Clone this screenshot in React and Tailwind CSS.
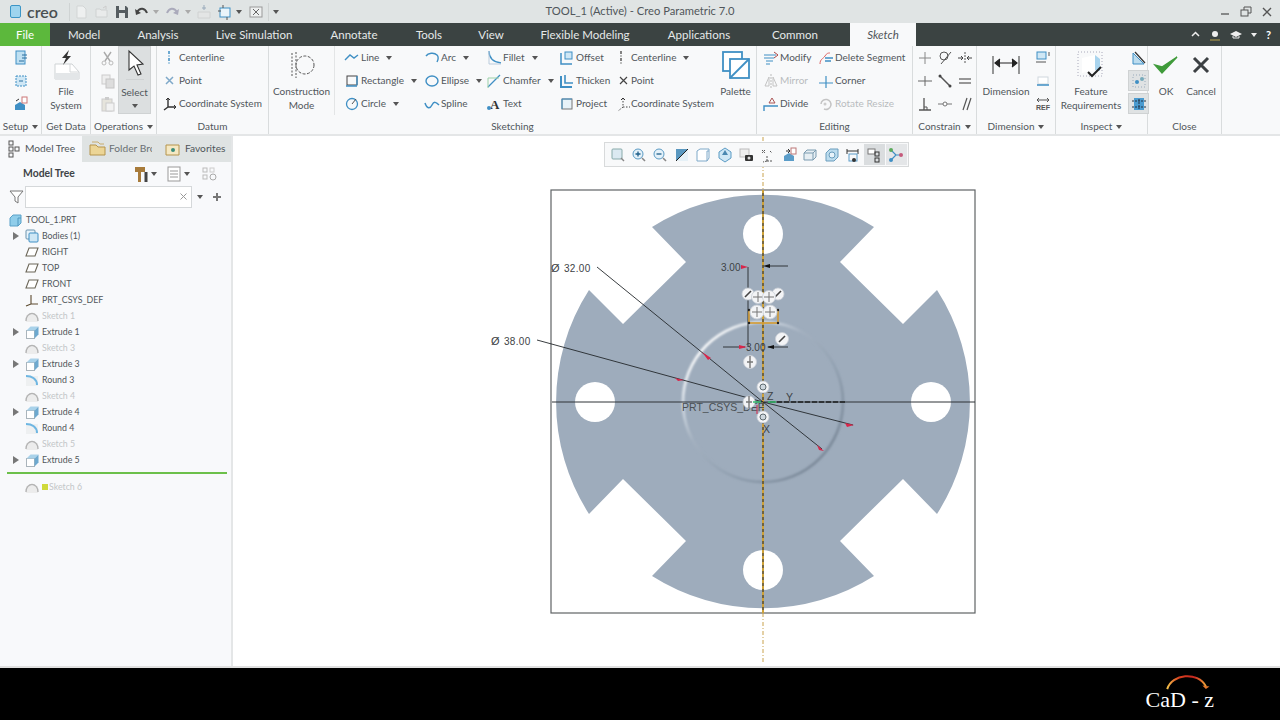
import React from 'react'

const BLUE = '#3f8fc4'

const Svg = ({ w = 16, h = 16, children, className = 'shrink-0' }) => (
  <svg width={w} height={h} viewBox={`0 0 ${w} ${h}`} fill="none" className={className}>{children}</svg>
)

const Caret = ({ color = '#555' }) => (
  <svg width="6" height="4" viewBox="0 0 6 4" className="shrink-0"><path d="M0 0h6L3 4z" fill={color} /></svg>
)

// ── Ribbon icons ─────────────────────────────────────────────────────────
const I = {
  setup1: <Svg><rect x="3" y="1" width="9" height="13" fill="#bfe0f2" stroke={BLUE} /><path d="M9 5h5M9 8h5M6 11h5" stroke="#2a6f9e" /></Svg>,
  setup2: <Svg><rect x="3" y="3" width="10" height="10" fill="#cfe7f5" stroke={BLUE} strokeDasharray="2 1" /><path d="M6 8h4" stroke="#2a6f9e" /></Svg>,
  setup3: <Svg><path d="M2 9l5-3 5 3v5H2z" fill={BLUE} /><rect x="9" y="1" width="5" height="6" fill="#fff" stroke="#c77" /><path d="M3 5l3-2" stroke="#333" /></Svg>,
  cut: <Svg><path d="M4 2l6 9M11 2L5 11" stroke="#aaa" strokeWidth="1.4" /><circle cx="4" cy="13" r="2" stroke="#bbb" /><circle cx="11" cy="13" r="2" stroke="#bbb" /></Svg>,
  copy: <Svg><rect x="2" y="2" width="8" height="9" fill="#eee" stroke="#ccc" /><rect x="6" y="6" width="8" height="9" fill="#ddd" stroke="#c4c4c4" /></Svg>,
  paste: <Svg><rect x="2" y="3" width="10" height="12" fill="#e6e4dc" stroke="#ccc" /><rect x="6" y="7" width="8" height="8" fill="#f2f2f2" stroke="#ccc" /><rect x="5" y="1" width="4" height="3" fill="#ccc" /></Svg>,
  vdash: <Svg><path d="M7 1v14" stroke={BLUE} strokeWidth="1.5" strokeDasharray="3 1.5 1 1.5" /></Svg>,
  pointB: <Svg><path d="M4 4l7 7M11 4l-7 7" stroke="#7fa9c9" strokeWidth="1.5" /></Svg>,
  csys: <Svg><path d="M6 2v9M6 11H14M6 11l-4 3" stroke="#333" strokeWidth="1.4" /><path d="M4 4l2-2 2 2M12 9l2 2-2 2" stroke="#333" /></Svg>,
  line: <Svg><path d="M1 10l5-5 4 3 4-3" stroke={BLUE} strokeWidth="1.4" /></Svg>,
  rect: <Svg><rect x="3" y="3" width="10" height="9" stroke="#444" /><path d="M2 13h11M13 3v9" stroke={BLUE} strokeWidth="1.3" /></Svg>,
  circle: <Svg><circle cx="8" cy="8" r="5.5" stroke={BLUE} strokeWidth="1.3" /><path d="M8 8l4-5" stroke="#555" /></Svg>,
  arc: <Svg><path d="M2 6c2-3 8-4 11-1 2 2 1 5 0 7" stroke={BLUE} strokeWidth="1.4" /></Svg>,
  ellipse: <Svg><ellipse cx="8" cy="8" rx="6" ry="5" stroke={BLUE} strokeWidth="1.4" /></Svg>,
  spline: <Svg><path d="M1 7c2 6 5 6 7 2s4-3 7 0" stroke={BLUE} strokeWidth="1.5" /></Svg>,
  fillet: <Svg><path d="M3 1c0 7 4 11 12 12" stroke={BLUE} strokeWidth="1.3" /><path d="M3 1v13h12" stroke="#bcd" /></Svg>,
  chamfer: <Svg><path d="M2 14L14 2" stroke={BLUE} strokeWidth="1.2" /><path d="M2 15V5M2 5h11" stroke="#9bd0a8" /></Svg>,
  text: <svg width="16" height="16" className="shrink-0"><text x="4" y="13" fontFamily="Liberation Serif, serif" fontWeight="700" fontSize="13" fill="#333">A</text><circle cx="3" cy="12" r="2" fill={BLUE} /></svg>,
  offset: <Svg><path d="M2 3v11h11" stroke={BLUE} strokeWidth="1.5" /><rect x="6" y="2" width="7" height="7" fill="#cfe7f5" stroke={BLUE} /></Svg>,
  thicken: <Svg><path d="M2 3v11h11" stroke={BLUE} strokeWidth="2" /><path d="M6 2v8h8" stroke={BLUE} strokeWidth="1.6" /></Svg>,
  project: <Svg><rect x="3" y="3" width="10" height="10" fill="#e8f2f8" stroke="#777" /><path d="M3 13V3h10" stroke={BLUE} /></Svg>,
  vdashDark: <Svg w={8}><path d="M4 1v14" stroke="#444" strokeWidth="1.3" strokeDasharray="3 1.5 1 1.5" /></Svg>,
  pointD: <Svg><path d="M4 4l7 7M11 4l-7 7" stroke="#444" strokeWidth="1.2" /></Svg>,
  csysDash: <Svg><path d="M7 2v9M7 11h7M7 11l-5 4" stroke="#444" strokeDasharray="1.5 1.5" /><path d="M5 4l2-2 2 2" stroke="#333" /></Svg>,
  modify: <Svg><path d="M1 5h12M1 8h10M3 11h7M3 14h4" stroke={BLUE} /><path d="M11 2l4 3-4 3" stroke="#a44" /></Svg>,
  mirror: <Svg><path d="M8 1v14" stroke="#bbb" strokeDasharray="2 1" /><path d="M6 4L2 13h4zM10 4l4 9h-4z" stroke="#c4c4c4" /></Svg>,
  divide: <Svg><path d="M1 15v-5h7M8 10h7" stroke={BLUE} strokeWidth="1.4" /><path d="M9 2l-3 5h6z" stroke="#a55" /></Svg>,
  del: <Svg><path d="M2 14c0-5 3-5 5-8s3-3 5-3" stroke="#d66" /><path d="M7 8h8M7 11h6" stroke={BLUE} strokeWidth="1.3" /></Svg>,
  corner: <Svg><path d="M1 10h14M8 3v12" stroke={BLUE} strokeWidth="1.2" /></Svg>,
  rotate: <Svg><path d="M3 8a5 5 0 1 1 3 5" stroke="#c4c4c4" strokeWidth="1.5" /><circle cx="7" cy="8" r="1.5" fill="#ccc" /></Svg>,
  cVert: <Svg><path d="M8 2v12M2 8h12" stroke="#888" strokeWidth="1" /></Svg>,
  cTan: <Svg><circle cx="7" cy="6" r="4" stroke="#555" /><path d="M4 14L14 2" stroke="#555" /></Svg>,
  cMid: <Svg><path d="M8 2v12" stroke="#555" strokeDasharray="2 1" /><path d="M1 8h4M11 8h4M4 6l2 2-2 2M12 6l-2 2 2 2" stroke="#444" /></Svg>,
  cHor: <Svg><path d="M1 8h14M8 3v10" stroke="#666" strokeWidth="1" /></Svg>,
  cPt: <Svg><path d="M3 3l10 10" stroke="#555" strokeWidth="1.5" /><circle cx="3" cy="3" r="1.5" fill="#444" /><circle cx="13" cy="13" r="1.5" fill="#444" /></Svg>,
  cEq: <Svg><path d="M2 6h12M2 10h12" stroke="#777" strokeWidth="1.3" /></Svg>,
  cPerp: <Svg><path d="M2 14h12M7 2v12" stroke="#555" strokeWidth="1.3" /><path d="M7 11h3v3" stroke="#555" /></Svg>,
  cOn: <Svg><path d="M1 8h14" stroke="#777" /><circle cx="8" cy="8" r="2" fill="#fff" stroke="#777" /></Svg>,
  cPar: <Svg><path d="M6 14l4-12M10 14l4-12" stroke="#555" strokeWidth="1.2" /></Svg>,
  dBase: <Svg><rect x="2" y="2" width="9" height="7" fill="#cfe7f5" stroke={BLUE} /><path d="M14 2v4M1 12h10" stroke="#555" /></Svg>,
  dPerim: <Svg><rect x="3" y="4" width="10" height="7" fill="#fff" stroke="#cfd8dd" /><path d="M2 12h12" stroke={BLUE} strokeWidth="1.5" /></Svg>,
  dRef: <svg width="16" height="16" className="shrink-0"><path d="M2 4h12M4 2l-2 2 2 2M12 2l2 2-2 2" stroke="#555" fill="none" /><text x="1" y="14" fontFamily="Liberation Sans, sans-serif" fontWeight="700" fontSize="7" fill="#555">REF</text></svg>,
  iDiag: <Svg><path d="M2 14V3l11 11z" fill="#bcdcee" stroke={BLUE} /><path d="M4 2l10 11" stroke="#333" strokeWidth="1.3" /></Svg>,
  iDots: <Svg><rect x="2" y="2" width="12" height="12" stroke="#9ab" strokeDasharray="1 2" /><circle cx="6" cy="9" r="2" fill={BLUE} /><circle cx="11" cy="6" r="2" fill="#7ab" /></Svg>,
  iBug: <Svg><rect x="3" y="2" width="10" height="12" fill="#4a9bd0" /><path d="M1 5h14M1 11h14M8 3v10" stroke="#234" strokeDasharray="2 1" /></Svg>,
}

// ── Ribbon parts ─────────────────────────────────────────────────────────
const Row = ({ icon, label, off, iconBox = 'w-[17px]', caret }) => (
  <div className={`flex h-[23px] items-center whitespace-nowrap ${off ? 'text-[#b9bcbe]' : 'text-[#50565a]'}`}>
    <span className={`flex shrink-0 items-center ${iconBox}`}>{icon}</span>
    <span>{label}</span>
    {caret && <span className="ml-[7px]"><Caret /></span>}
  </div>
)

const Group = ({ width, label, caret, children }) => (
  <div className={`relative flex h-[88px] shrink-0 flex-col border-r border-[#d9dcdd] ${width}`}>
    <div className="flex h-[69px]">{children}</div>
    <div className="flex h-[19px] items-center justify-center gap-[4px] pt-[4px] text-[#50565a]">
      {label}
      {caret && <Caret />}
    </div>
  </div>
)

const Big = ({ width, icon, lines }) => (
  <div className={`flex shrink-0 flex-col items-center leading-[14px] text-[#50565a] ${width}`}>
    <div className="flex h-[38px] items-center justify-center">{icon}</div>
    {lines.map(l => <span key={l} className="whitespace-nowrap">{l}</span>)}
  </div>
)

const IconCell = ({ children, on }) => (
  <div className={`flex h-[21px] w-[21px] items-center justify-center ${on ? 'border border-[#cfd2d3] bg-[#dfe2e3]' : ''}`}>{children}</div>
)

const Ribbon = () => (
  <div className="flex h-[90px] items-start border-b-2 border-[#e4e6e7] bg-[#f8f9fa] text-[10px]">
    <Group width="w-[42px]" label="Setup" caret>
      <div className="flex w-full flex-col items-center">
        {[I.setup1, I.setup2, I.setup3].map((ic, i) => <div key={i} className="flex h-[23px] items-center">{ic}</div>)}
      </div>
    </Group>
    <Group width="w-[49px]" label="Get Data">
      <Big
        width="w-full"
        lines={['File', 'System']}
        icon={<Svg w={30} h={34}><path d="M4 16h17l7 8v7H4z" fill="#fff" stroke="#cfd3d5" /><path d="M4 25h24v6H4z" fill="#e3e6e8" /><path d="M19 16v8h9" stroke="#d5d8da" /><path d="M18 2l-7 8 4 0-3 7 8-9-4 0z" fill="#333" /></Svg>}
      />
    </Group>
    <Group width="w-[66px]" label="Operations" caret>
      <div className="flex">
        <div className="flex w-[26px] flex-col items-end pr-[1px]">
          {[I.cut, I.copy, I.paste].map((ic, i) => <div key={i} className="flex h-[23px] items-center">{ic}</div>)}
        </div>
        <div className="ml-[1px] flex h-[68px] w-[33px] flex-col items-center border border-[#cfd2d3] bg-[#dcdfe0] leading-[14px] text-[#50565a]">
          <div className="flex h-[33px] items-center border-b border-[#cfd2d3]">
            <Svg w={18} h={28}><path d="M3 2l0 19 5-4 4 9 3-1-4-9 6-1z" fill="#fff" stroke="#333" strokeWidth="1.1" /></Svg>
          </div>
          <span className="mt-[5px]">Select</span>
          <span className="mt-[5px]"><Caret /></span>
        </div>
      </div>
    </Group>
    <Group width="w-[112px]" label="Datum">
      <div className="pl-[5px]">
        <Row icon={I.vdash} label="Centerline" />
        <Row icon={I.pointB} label="Point" />
        <Row icon={I.csys} label="Coordinate System" />
      </div>
    </Group>
    <Group width="w-[488px]" label="Sketching">
      <div className="w-[66px] shrink-0 border-r border-[#e3e5e6]">
        <Big
          width="w-full"
          lines={['Construction', 'Mode']}
          icon={<Svg w={30} h={28}><path d="M5 2v24M9 1v26" stroke="#555" strokeDasharray="2 1.5" /><circle cx="18" cy="14" r="9" stroke="#555" strokeDasharray="3 1.5" /></Svg>}
        />
      </div>
      <div className="ml-[9px] w-[80px] shrink-0">
        <Row icon={I.line} label="Line" caret />
        <Row icon={I.rect} label="Rectangle" caret />
        <Row icon={I.circle} label="Circle" caret />
      </div>
      <div className="w-[62px] shrink-0">
        <Row icon={I.arc} label="Arc" caret />
        <Row icon={I.ellipse} label="Ellipse" caret />
        <Row icon={I.spline} label="Spline" />
      </div>
      <div className="w-[73px] shrink-0">
        <Row icon={I.fillet} label="Fillet" caret />
        <Row icon={I.chamfer} label="Chamfer" caret />
        <Row icon={I.text} label="Text" />
      </div>
      <div className="w-[57px] shrink-0">
        <Row icon={I.offset} label="Offset" />
        <Row icon={I.thicken} label="Thicken" />
        <Row icon={I.project} label="Project" />
      </div>
      <div className="w-[104px] shrink-0">
        <Row icon={I.vdashDark} iconBox="w-[15px] pl-[1px]" label="Centerline" caret />
        <Row icon={I.pointD} iconBox="w-[15px]" label="Point" />
        <Row icon={I.csysDash} iconBox="w-[15px]" label="Coordinate System" />
      </div>
      <Big
        width="w-[31px]"
        lines={['Palette']}
        icon={<Svg w={30} h={30}><rect x="2" y="2" width="19" height="19" fill="#fff" stroke={BLUE} strokeWidth="1.8" /><rect x="9" y="9" width="19" height="19" fill="#fff" stroke={BLUE} strokeWidth="1.8" /><path d="M9 28L28 9" stroke={BLUE} strokeWidth="1.8" /></Svg>}
      />
    </Group>
    <Group width="w-[156px]" label="Editing">
      <div className="ml-[6px] w-[55px] shrink-0">
        <Row icon={I.modify} label="Modify" />
        <Row icon={I.mirror} label="Mirror" off />
        <Row icon={I.divide} label="Divide" />
      </div>
      <div>
        <Row icon={I.del} label="Delete Segment" />
        <Row icon={I.corner} label="Corner" />
        <Row icon={I.rotate} label="Rotate Resize" off />
      </div>
    </Group>
    <Group width="w-[64px]" label="Constrain" caret>
      <div className="grid h-[69px] grid-cols-[20px_20px_20px] grid-rows-[23px_23px_23px] place-items-center pl-[2px]">
        {[I.cVert, I.cTan, I.cMid, I.cHor, I.cPt, I.cEq, I.cPerp, I.cOn, I.cPar].map((ic, i) => <React.Fragment key={i}>{ic}</React.Fragment>)}
      </div>
    </Group>
    <Group width="w-[79px]" label="Dimension" caret>
      <Big
        width="w-[58px]"
        lines={['Dimension']}
        icon={<Svg w={30} h={24}><path d="M2 3v18M28 3v18" stroke="#555" strokeWidth="1.2" /><path d="M4 10h22M9 6l-5 4 5 4M21 6l5 4-5 4" fill="#222" stroke="#222" strokeWidth="1.2" /></Svg>}
      />
      <div className="flex flex-col items-center">
        {[I.dBase, I.dPerim, I.dRef].map((ic, i) => <div key={i} className="flex h-[23px] items-center">{ic}</div>)}
      </div>
    </Group>
    <Group width="w-[92px]" label="Inspect" caret>
      <Big
        width="w-[70px]"
        lines={['Feature', 'Requirements']}
        icon={<Svg w={30} h={30}><rect x="2" y="2" width="24" height="24" stroke="#aab" strokeDasharray="1 2" /><path d="M6 8l13-3v15l-13 3z" fill="#fff" /><path d="M19 5l5 4v12l-5-1z" fill="#a9d4ee" /><path d="M12 22l4 4 9-9" stroke="#222" strokeWidth="2" /></Svg>}
      />
      <div className="flex flex-col items-center pl-[2px]">
        <div className="flex h-[23px] items-center"><IconCell>{I.iDiag}</IconCell></div>
        <div className="flex h-[23px] items-center"><IconCell on>{I.iDots}</IconCell></div>
        <div className="flex h-[23px] items-center"><IconCell on>{I.iBug}</IconCell></div>
      </div>
    </Group>
    <Group width="w-[74px]" label="Close">
      <Big
        width="w-[36px]"
        lines={['OK']}
        icon={<Svg w={26} h={22}><path d="M2 11l7 8L24 3l-15 10z" fill="#3f9b3a" stroke="#3f9b3a" strokeWidth="1.5" /></Svg>}
      />
      <Big
        width="w-[34px]"
        lines={['Cancel']}
        icon={<Svg w={20} h={20}><path d="M3 3l14 14M17 3L3 17" stroke="#3c4043" strokeWidth="3" /></Svg>}
      />
    </Group>
  </div>
)

// ── Title bar ────────────────────────────────────────────────────────────
const Slot = ({ width, children }) => (
  <span className={`flex shrink-0 items-center justify-center ${width}`}>{children}</span>
)

const TitleBar = () => (
  <div className="grid h-[23px] grid-cols-[1fr_auto_1fr] items-center bg-[#e0e4e4] text-[#50565a]">
    <div className="flex items-center">
      <div className="ml-[10px] h-[13px] w-[11px] rounded-[2px] border border-[#3c95c6] bg-[#9ed4ee]" />
      <span className="ml-[6px] w-[42px] text-[16px] font-semibold leading-none text-[#4a4f52]">creo</span>
      <span className="h-[18px] w-px bg-[#cfd3d3]" />
      <div className="flex items-center">
        <Slot width="w-[21px]"><Svg><path d="M4 2h6l3 3v9H4z" fill="#eef0f0" stroke="#d2d5d5" /></Svg></Slot>
        <Slot width="w-[21px]"><Svg><path d="M2 13V5h4l1 1h6v7z" fill="#e9ebeb" stroke="#cfd2d2" /><path d="M9 4l3-2v3" stroke="#ccc" /></Svg></Slot>
        <Slot width="w-[20px]"><Svg><path d="M2 2h10l2 2v10H2z" fill="#555c60" /><rect x="5" y="2" width="6" height="4" fill="#e0e4e4" /><rect x="5" y="9" width="6" height="5" fill="#e0e4e4" /></Svg></Slot>
        <Slot width="w-[19px]"><Svg><path d="M3 8c3-5 8-4 10 1" stroke="#444" strokeWidth="2" /><path d="M1 5l1 6 5-2z" fill="#444" /></Svg></Slot>
        <Slot width="w-[10px]"><Caret color="#aaa" /></Slot>
        <Slot width="w-[22px]"><Svg><path d="M13 8c-3-5-8-4-10 1" stroke="#aab" strokeWidth="2" /><path d="M15 5l-1 6-5-2z" fill="#aab" /></Svg></Slot>
        <Slot width="w-[10px]"><Caret color="#aaa" /></Slot>
        <Slot width="w-[22px]"><Svg><path d="M2 14V8h12v6z" fill="#e3e5e5" stroke="#d0d2d2" /><path d="M8 1v5M6 4h4" stroke="#9ab" /></Svg></Slot>
        <Slot width="w-[20px]"><Svg><rect x="3" y="4" width="10" height="9" stroke={BLUE} fill="#eaf4fa" /><path d="M6 1v3M10 13v3M1 7h3" stroke="#555" /></Svg></Slot>
        <Slot width="w-[8px]"><Caret /></Slot>
        <Slot width="w-[25px]"><Svg><rect x="2" y="3" width="12" height="10" fill="#eef0f0" stroke="#999" /><path d="M5 5l6 6M11 5l-6 6" stroke="#666" /></Svg></Slot>
        <span className="h-[18px] w-px bg-[#cfd3d3]" />
        <Slot width="w-[14px]"><Caret /></Slot>
      </div>
    </div>
    <div className="whitespace-nowrap text-[11.2px]">TOOL_1 (Active) - Creo Parametric 7.0</div>
    <div className="flex items-center justify-end gap-[9px] pr-[7px]">
      <Svg w={12} h={12}><path d="M2 8h8" stroke="#555" strokeWidth="1.3" /></Svg>
      <Svg w={12} h={12}><rect x="1" y="4" width="7" height="6" stroke="#555" /><path d="M4 4V1h7v6H8" stroke="#555" /></Svg>
      <Svg w={12} h={12}><path d="M2 2l8 8M10 2l-8 8" stroke="#555" strokeWidth="1.4" /></Svg>
    </div>
  </div>
)

// ── Tabs ─────────────────────────────────────────────────────────────────
const TABS = [
  ['Model', 'w-[68px]'],
  ['Analysis', 'w-[80px]'],
  ['Live Simulation', 'w-[112px]'],
  ['Annotate', 'w-[88px]'],
  ['Tools', 'w-[62px]'],
  ['View', 'w-[62px]'],
  ['Flexible Modeling', 'w-[126px]'],
  ['Applications', 'w-[102px]'],
  ['Common', 'w-[90px]'],
]

const TabBar = () => (
  <div className="flex h-[23px] items-center bg-[#3b4342] text-[11.5px] text-[#e6e9e9]">
    <div className="flex h-full w-[50px] items-center justify-center bg-[#5cb83c] text-white">File</div>
    {TABS.map(([t, w]) => (
      <div key={t} className={`text-center ${w}`}>{t}</div>
    ))}
    <div className="ml-[10px] flex h-full w-[66px] items-center justify-center bg-[#f8f9fa] italic text-[#50565a]">Sketch</div>
    <div className="ml-auto flex items-center gap-[9px] pr-[6px]">
      <Svg w={9} h={9}><path d="M1 6l3.5-3.5L8 6" stroke="#eee" strokeWidth="1.5" /></Svg>
      <Svg w={12} h={12}><circle cx="6" cy="5" r="3" fill="#eee" /><path d="M1 11h10" stroke="#b9a24a" /></Svg>
      <Svg w={12} h={12}><path d="M6 2l6 3-6 3-6-3z" fill="#eee" /><path d="M3 7v2h6V7" stroke="#eee" /></Svg>
      <Caret color="#eee" />
      <span className="w-[8px] text-[11px] font-bold leading-none text-white">?</span>
    </div>
  </div>
)

// ── Model tree ───────────────────────────────────────────────────────────
const plane = <Svg w={14} h={12}><path d="M4 2h9l-3 8H1z" fill="#fff" stroke="#6b6658" strokeWidth="1.1" /></Svg>
const csysTree = <Svg w={14} h={13}><path d="M6 1v9M6 10h7M6 10l-5 2" stroke="#5c4a2f" strokeWidth="1.1" /></Svg>
const sketch = <Svg w={14} h={13}><rect x="1" y="5" width="12" height="7" fill="#ececec" /><path d="M1 11c0-10 12-10 12 0" stroke="#b4b4b4" strokeWidth="1.4" /></Svg>
const extrude = <Svg w={14} h={14}><rect x="1.5" y="5.5" width="8" height="8" fill="#fff" stroke="#aab4bb" /><path d="M1.5 5.5l4-4h8l-4 4z" fill="#a9d2ea" /><path d="M9.5 5.5l4-4v8l-4 4z" fill="#6ea9cf" /></Svg>
const round = <Svg w={14} h={14}><rect x="1" y="3" width="12" height="10" fill="#eef0f1" /><path d="M1 3c6 0 11 3 11 9" stroke="#6eb6e2" strokeWidth="2" /></Svg>
const bodies = <Svg w={14} h={14}><rect x="1" y="1" width="9" height="9" rx="1" fill="#e8f3fa" stroke="#6b93ad" /><rect x="4" y="4" width="9" height="9" rx="1" fill="#cfe7f5" stroke="#3f8fc4" /></Svg>
const part = <Svg w={13} h={13}><path d="M1 4l3-3h8v8l-3 3H1z" fill="#8fcdea" stroke="#5aa1c8" /><path d="M9 12V4h3" stroke="#4f98c0" /></Svg>

const TREE = [
  { label: 'Bodies (1)', icon: bodies, arrow: true },
  { label: 'RIGHT', icon: plane },
  { label: 'TOP', icon: plane },
  { label: 'FRONT', icon: plane },
  { label: 'PRT_CSYS_DEF', icon: csysTree },
  { label: 'Sketch 1', icon: sketch, off: true },
  { label: 'Extrude 1', icon: extrude, arrow: true },
  { label: 'Sketch 3', icon: sketch, off: true },
  { label: 'Extrude 3', icon: extrude, arrow: true },
  { label: 'Round 3', icon: round },
  { label: 'Sketch 4', icon: sketch, off: true },
  { label: 'Extrude 4', icon: extrude, arrow: true },
  { label: 'Round 4', icon: round },
  { label: 'Sketch 5', icon: sketch, off: true },
  { label: 'Extrude 5', icon: extrude, arrow: true },
]

const TreeRow = ({ item }) => (
  <div className={`flex h-[16px] items-center pl-[13px] ${item.off ? 'text-[#c3c6c8]' : 'text-[#50565a]'}`}>
    <span className="flex w-[12px] items-center">
      {item.arrow && <svg width="6" height="8" viewBox="0 0 6 8"><path d="M0 0l6 4-6 4z" fill="#777" /></svg>}
    </span>
    <span className="flex w-[17px] items-center">{item.icon}</span>
    <span>{item.label}</span>
  </div>
)

const Sidebar = () => (
  <div className="flex w-[233px] shrink-0 flex-col border-r-2 border-[#e4e6e7] bg-[#f8f9fb] text-[8.8px]">
    <div className="flex h-[26px] items-center bg-[#dfe3e3] text-[10.2px] text-[#50565a]">
      <div className="flex h-full w-[82px] items-center gap-[5px] bg-[#f8f9fb] pl-[8px]">
        <Svg w={12} h={18}><rect x="1" y="1" width="4" height="4" stroke="#555" /><rect x="1" y="7" width="4" height="4" stroke="#555" /><rect x="1" y="13" width="4" height="4" stroke="#555" /><rect x="7" y="7" width="4" height="4" stroke="#555" /></Svg>
        <span className="whitespace-nowrap">Model Tree</span>
      </div>
      <div className="flex w-[77px] items-center gap-[3px] overflow-hidden pl-[7px] whitespace-nowrap">
        <Svg w={17} h={15}><path d="M1 4h6l2 2h7v8H1z" fill="#ecd596" stroke="#b5944d" /><path d="M3 1h6l2 2h4" stroke="#c9ac6c" /></Svg>
        <span className="w-[43px] overflow-hidden text-[#6a7073]">Folder Browser</span>
      </div>
      <div className="flex items-center gap-[5px] pl-[6px] whitespace-nowrap">
        <Svg w={15} h={15}><path d="M1 4h13v10H1z" fill="#f5e8c3" stroke="#b5944d" /><circle cx="8" cy="9" r="2" fill="#3a8c7a" /></Svg>
        <span>Favorites</span>
      </div>
    </div>
    <div className="flex h-[23px] items-center pl-[23px] pr-[10px] text-[#3f4447]">
      <span className="w-[110px] text-[10.4px] font-bold">Model Tree</span>
      <Svg w={16} h={18}><path d="M2 2h10v5H8v10H5V7H2z" fill="#a87b3b" /><path d="M13 7v10" stroke="#444" strokeWidth="3" /></Svg>
      <span className="ml-[2px] mr-[10px]"><Caret /></span>
      <Svg w={14} h={16}><rect x="1" y="1" width="12" height="14" fill="#fff" stroke="#999" /><path d="M3 5h8M3 8h8M3 11h8" stroke="#999" /></Svg>
      <span className="ml-[3px] mr-[12px]"><Caret /></span>
      <Svg w={16} h={16}><rect x="1" y="2" width="4" height="4" stroke="#bbb" /><rect x="1" y="9" width="4" height="4" stroke="#bbb" /><rect x="8" y="2" width="4" height="4" stroke="#ccc" /><circle cx="11" cy="11" r="3" stroke="#aaa" /></Svg>
    </div>
    <div className="flex h-[23px] items-center pl-[9px]">
      <Svg w={15} h={14}><path d="M1 1h13L9 7v6L6 11V7z" fill="#fff" stroke="#777" /></Svg>
      <div className="ml-px flex h-[22px] w-[167px] items-center justify-end border border-[#d5d8da] bg-white pr-[3px]">
        <Svg w={9} h={9}><path d="M1.5 1.5l6 6M7.5 1.5l-6 6" stroke="#999" /></Svg>
      </div>
      <span className="ml-[5px]"><Caret /></span>
      <Svg w={24} h={10}><path d="M14 1v8M10 5h8" stroke="#777" strokeWidth="2" /></Svg>
    </div>
    <div className="mt-[4px]">
      <div className="flex h-[16px] items-center pl-[9px] text-[#50565a]">
        <span className="flex w-[17px] items-center">{part}</span>
        <span>TOOL_1.PRT</span>
      </div>
      {TREE.map(item => <TreeRow key={item.label} item={item} />)}
      <div className="ml-[7px] mt-[4px] h-[2px] w-[220px] bg-[#6cc04a]" />
      <div className="mt-[5px] flex h-[16px] items-center pl-[25px] text-[#c3c6c8]">
        <span className="flex w-[17px] items-center">{sketch}</span>
        <span className="flex items-center">
          <span className="mr-px h-[6px] w-[6px] bg-[#cfd93a]" />
          Sketch 6
        </span>
      </div>
    </div>
  </div>
)

// ── Graphics toolbar ─────────────────────────────────────────────────────
const VIEW_ICONS = [
  <Svg key="1"><rect x="2" y="2" width="10" height="10" rx="1" fill="#dbe9f1" stroke="#8aa" /><path d="M11 11l3 3" stroke="#888" strokeWidth="1.4" /></Svg>,
  <Svg key="2"><circle cx="7" cy="7" r="5" fill="#e4f1f9" stroke="#5b9bc4" /><path d="M4.5 7h5M7 4.5v5" stroke="#1d5d88" strokeWidth="1.3" /><path d="M11 11l3 3" stroke="#888" strokeWidth="1.6" /></Svg>,
  <Svg key="3"><circle cx="7" cy="7" r="5" fill="#e4f1f9" stroke="#5b9bc4" /><path d="M4.5 7h5" stroke="#1d5d88" strokeWidth="1.3" /><path d="M11 11l3 3" stroke="#888" strokeWidth="1.6" /></Svg>,
  <Svg key="4"><rect x="2" y="2" width="12" height="12" fill="#5a98c0" /><path d="M2 14L14 2v12z" fill="#e6f1f7" /><path d="M2 14L14 2" stroke="#222" /></Svg>,
  <Svg key="5"><path d="M2 4l3-2h9v9l-2 3H2z" fill="#fff" stroke="#7fa9c9" /><path d="M12 14V4h2" stroke="#7fa9c9" /></Svg>,
  <Svg key="6"><path d="M2 5l6-4 6 4v6l-6 4-6-4z" fill="#cfe7f5" stroke="#5b9bc4" /><path d="M8 3l3 5H5z" fill="#4a87b0" /></Svg>,
  <Svg key="7"><rect x="2" y="2" width="9" height="8" fill="#eee" stroke="#bbb" /><rect x="7" y="8" width="8" height="6" rx="1" fill="#333" /><circle cx="11" cy="11" r="1.5" fill="#ddd" /></Svg>,
  <Svg key="8"><path d="M3 3l3 3M6 3L3 6M11 4l2 2M8 9v5M8 14h6M8 14l-4 1" stroke="#555" strokeDasharray="2 1" /></Svg>,
  <Svg key="9"><path d="M3 9l5-3 5 3v5H3z" fill="#5a9cc8" /><rect x="10" y="1" width="5" height="6" fill="#fff" stroke="#b77" /><path d="M5 4h4M7 2l2 2-2 2" stroke="#333" /></Svg>,
  <Svg key="10"><path d="M2 6l3-3h9v7l-3 3H2z" fill="#e6eef3" stroke="#7b9bb0" /><path d="M2 6h9v7M11 6l3-3" stroke="#7b9bb0" /></Svg>,
  <Svg key="11"><path d="M2 6l4-4h8v8l-4 4H2z" fill="#bcdcee" stroke="#6a9dbd" /><circle cx="8" cy="8" r="3" fill="#e8f3fa" stroke="#6a9dbd" /></Svg>,
  <Svg key="12"><path d="M2 2v5M13 2v5M2 4h11" stroke="#333" /><rect x="4" y="7" width="8" height="7" stroke="#5a9cc8" /><circle cx="9" cy="13" r="2" fill="#333" /></Svg>,
]

const ViewToolbar = () => (
  <div className="absolute left-[371px] top-[6px] flex h-[25px] w-[305px] items-center border border-[#d8dadb] bg-[#f8f9fa] pl-[2px]">
    {VIEW_ICONS.map((ic, i) => <div key={i} className="flex w-[21.4px] items-center justify-center">{ic}</div>)}
    <div className="flex h-[21px] w-[21px] items-center justify-center bg-[#dadddf]">
      <Svg><rect x="2" y="2" width="7" height="5" fill="#fff" stroke="#777" /><rect x="9" y="5" width="4" height="4" stroke="#333" /><rect x="9" y="11" width="4" height="4" stroke="#333" /></Svg>
    </div>
    <div className="ml-px flex h-[21px] w-[21px] items-center justify-center bg-[#e4e6e8]">
      <Svg><path d="M3 3l5 5-5 5M8 8h5" stroke="#3f8fc4" strokeWidth="1.2" /><circle cx="3" cy="3" r="2" fill="#5bab5b" /><circle cx="13" cy="8" r="2" fill="#c55a7b" /><circle cx="3" cy="13" r="2" fill="#3f8fc4" /></Svg>
    </div>
  </div>
)

// ── Canvas drawing, in screen coordinates ────────────────────────────────
const PART = 'M652 227 A207 207 0 0 1 874 227 L840 262 L903 324 L937 290 A207 207 0 0 1 937 514 L903 479 L840 541 L874 576 A207 207 0 0 1 652 576 L686 541 L623 479 L589 514 A207 207 0 0 1 589 290 L623 324 L686 262 Z'

const Handle = ({ x, y, r = 8, kind }) => (
  <g>
    <circle cx={x} cy={y} r={r} fill="#f3f4f6" stroke="#c9ced6" strokeWidth="0.8" />
    {kind === 'lock' && <path d={`M${x - 3} ${y + 3}L${x + 3} ${y - 3}`} stroke="#444" strokeWidth="1.6" />}
    {kind === 'cross' && <path d={`M${x} ${y - 5}V${y + 5}M${x - 5} ${y}H${x + 5}`} stroke="#777" strokeWidth="1" />}
    {kind === 'split' && <path d={`M${x} ${y - 6}V${y + 6}M${x - 3} ${y}H${x + 3}`} stroke="#777" strokeWidth="1.4" />}
    {kind === 'ring' && <circle cx={x} cy={y} r={r - 3} fill="#cfd8df" stroke="#5e6a70" strokeWidth="1" />}
  </g>
)

const Red = ({ d }) => <path d={d} fill="#d8264a" />

const Canvas = () => (
  <div className="relative min-w-0 flex-1 bg-white">
    <svg width="1047" height="530" viewBox="233 136 1047 530" className="block">
      <defs>
        <linearGradient id="rim" x1="0" y1="0" x2="1" y2="1">
          <stop offset="0.14" stopColor="#ffffff" />
          <stop offset="0.26" stopColor="#d5dde5" />
          <stop offset="0.4" stopColor="#a4b1c0" />
          <stop offset="0.6" stopColor="#93a2b2" />
          <stop offset="0.85" stopColor="#7b8999" />
        </linearGradient>
        <filter id="soft" x="-10%" y="-10%" width="120%" height="120%">
          <feGaussianBlur stdDeviation="0.8" />
        </filter>
      </defs>
      <rect x="551" y="190" width="424" height="423" fill="#fff" stroke="#5f6365" strokeWidth="1.2" />
      <path d={PART} fill="#9eacbc" />
      <circle cx="763" cy="234" r="20" fill="#fff" />
      <circle cx="763" cy="570" r="20" fill="#fff" />
      <circle cx="595" cy="402" r="20" fill="#fff" />
      <circle cx="931" cy="402" r="20" fill="#fff" />
      <circle cx="763" cy="402" r="80" fill="none" stroke="url(#rim)" strokeWidth="2.6" filter="url(#soft)" />
      <path d="M552 402H975" stroke="#2f3336" strokeWidth="1" />
      <path d="M770 402H846" stroke="#2f3336" strokeWidth="2" strokeDasharray="5 2" />
      {/* centerline */}
      <path d="M763 137V190M763 613V663" stroke="#c9a24c" strokeWidth="1" strokeDasharray="4 2 1 2" />
      <path d="M763 190V613" stroke="#6b5a2e" strokeWidth="1.8" />
      <path d="M763 190V613" stroke="#d9a93a" strokeWidth="1.8" strokeDasharray="3 3" />
      {/* dimensions */}
      <g stroke="#24282b" strokeWidth="0.9" fill="none">
        <path d="M597 267L763 402L822 449" />
        <path d="M537 340L763 402L853 425" />
        <path d="M748 267V347M770 266H788M723 347H745M768 347H788" />
      </g>
      <Red d="M702 352l9 6-3 2z" />
      <Red d="M817 445l7 6-5-1z" />
      <Red d="M675 378l9 2-6 1z" />
      <Red d="M845 423l9 2-7 2z" />
      <Red d="M741 265l7 2-7 2z" />
      <Red d="M739 345l8 2-8 2z" />
      <path d="M763 266l7-2v4zM767 347l7-2v4z" fill="#111" />
      <g fontFamily="Liberation Sans, sans-serif" fontSize="10" fill="#3d4245">
        <text x="721" y="271">3.00</text>
        <text x="746" y="351">3.00</text>
        <text x="551" y="272" fontSize="11">Ø</text>
        <text x="564" y="272" fontSize="10" letterSpacing="0.3">32.00</text>
        <text x="491" y="345" fontSize="11">Ø</text>
        <text x="504" y="345" fontSize="10" letterSpacing="0.3">38.00</text>
        <text x="682" y="411" fontSize="10.5" fill="#4a5054">PRT_CSYS_DEF</text>
        <text x="767" y="400" fontSize="10.5">Z</text>
        <text x="786" y="401" fontSize="10.5">Y</text>
        <text x="763" y="433" fontSize="10.5">X</text>
      </g>
      {/* weak handles */}
      <rect x="749" y="310" width="29" height="13" fill="none" stroke="#d2992f" strokeWidth="1.6" />
      <path d="M749 310h.01M778 310h.01M749 323h.01M778 323h.01" stroke="#222" strokeWidth="2.4" strokeLinecap="round" />
      <Handle x={748} y={294} r={6} kind="lock" />
      <Handle x={778} y={294} r={6} kind="lock" />
      <Handle x={758} y={297} r={6.5} kind="cross" />
      <Handle x={769} y={297} r={6.5} kind="cross" />
      <Handle x={757} y={312} r={7} kind="cross" />
      <Handle x={770} y={312} r={7} kind="cross" />
      <Handle x={782} y={339} r={6.5} kind="lock" />
      <Handle x={750} y={362} r={6.5} kind="split" />
      <Handle x={749} y={402} r={6} kind="split" />
      <Handle x={763} y={387} r={6} kind="ring" />
      <Handle x={763} y={417} r={6} kind="ring" />
      <path d="M753 402h8" stroke="#38c070" strokeWidth="1.5" />
      <path d="M768 402h8" stroke="#38c070" strokeWidth="1.5" />
      <path d="M757 405v9" stroke="#d8264a" strokeWidth="1" />
    </svg>
    <ViewToolbar />
  </div>
)

// ── Watermark strip ──────────────────────────────────────────────────────
const Footer = () => (
  <div className="flex h-[52px] justify-end bg-black pr-[66px]">
    <div className="flex flex-col items-end pt-[4px]">
      <svg width="52" height="18" viewBox="0 0 52 20" className="mr-[1px]">
        <defs>
          <linearGradient id="sw" x1="0" y1="0" x2="1" y2="0">
            <stop offset="0" stopColor="#f2c14a" />
            <stop offset="0.3" stopColor="#d8401f" />
            <stop offset="0.7" stopColor="#c8261f" />
            <stop offset="1" stopColor="#f0a63a" />
          </linearGradient>
        </defs>
        <path d="M4 19C9 2 38 -1 47 16" stroke="url(#sw)" strokeWidth="2.2" fill="none" />
        <path d="M43 15l8 1-4 3z" fill="#e2762a" />
      </svg>
      <span className="font-['Liberation_Serif',serif] text-[22px] leading-[20px] text-white">CaD - z</span>
    </div>
  </div>
)

export default function App() {
  return (
    <div className="flex h-[720px] w-[1280px] flex-col overflow-hidden bg-white font-['Lato','Open_Sans',sans-serif]">
      <TitleBar />
      <TabBar />
      <Ribbon />
      <div className="flex h-[530px]">
        <Sidebar />
        <Canvas />
      </div>
      <div className="h-[2px] bg-[#e0e0e0]" />
      <Footer />
    </div>
  )
}
